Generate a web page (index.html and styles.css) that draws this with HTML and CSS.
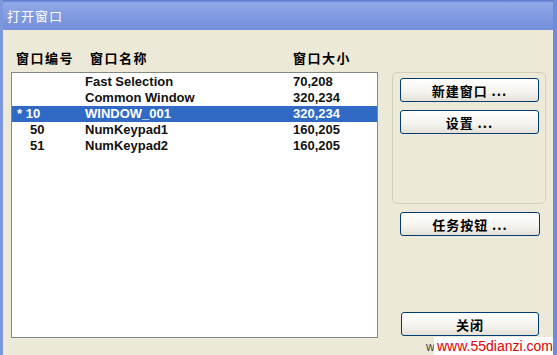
FILE: index.html
```html
<!DOCTYPE html>
<html>
<head>
    <title>打开窗口</title>
    <link rel="stylesheet" href="styles.css">
</head>
<body>
    <div class="window">
        <div class="titlebar">打开窗口</div>
        <div class="main">
            <div class="left">
                <div class="heads">
                    <span class="c1">窗口编号</span>
                    <span class="c2">窗口名称</span>
                    <span class="c3">窗口大小</span>
                </div>
                <div class="listbox">
                    <div class="row"><span class="n"></span><span class="name">Fast Selection</span><span class="size">70,208</span></div>
                    <div class="row"><span class="n"></span><span class="name">Common Window</span><span class="size">320,234</span></div>
                    <div class="row sel"><span class="n">* 10</span><span class="name">WINDOW_001</span><span class="size">320,234</span></div>
                    <div class="row"><span class="n ind">50</span><span class="name">NumKeypad1</span><span class="size">160,205</span></div>
                    <div class="row"><span class="n ind">51</span><span class="name">NumKeypad2</span><span class="size">160,205</span></div>
                </div>
            </div>
            <div class="right">
                <div class="group">
                    <button class="btn">新建窗口 ...</button>
                    <button class="btn">设置 ...</button>
                </div>
                <button class="btn task">任务按钮 ...</button>
                <button class="btn close">关闭</button>
            </div>
        </div>
        <span class="mark-back">w</span>
        <span class="mark">www.55dianzi.com</span>
    </div>
</body>
</html>
```

FILE: styles.css
```css
body {
    margin: 0;
    background: #ece9d8;
    font-family: "Liberation Sans", "Noto Sans CJK SC", sans-serif;
}
.window {
    position: relative;
    width: 557px;
    height: 355px;
    box-sizing: border-box;
    border-left: 3px solid #7c97de;
    border-right: 4px solid #6f8cdc;
    overflow: hidden;
}
.titlebar {
    height: 30px;
    line-height: 31px;
    color: #fff;
    font-size: 13px;
    font-family: "Noto Sans CJK SC", sans-serif;
    letter-spacing: 1px;
    background: linear-gradient(#5674cc 0, #92a9e8 3px, #8aa2e4 30%, #7c96de 70%, #7490dc 100%);
    margin-left: -3px;
    margin-right: -4px;
    padding-left: 7px;
}
.main {
    display: flex;
    padding: 20px 7px 0 8px;
}
.left {
    width: 367px;
}
.heads {
    display: flex;
    height: 16px;
    line-height: 16px;
    margin-bottom: 6px;
    font-family: "Noto Sans CJK SC", sans-serif;
    font-weight: bold;
    font-size: 13px;
    letter-spacing: 1.5px;
}
.heads .c1 { margin-left: 5px; width: 74px; }
.heads .c2 { width: 203px; }
.listbox {
    height: 266px;
    box-sizing: border-box;
    border: 1px solid #7f8a80;
    background: #fff;
    padding-top: 1px;
}
.row {
    display: flex;
    height: 16px;
    line-height: 16px;
    font-size: 13px;
    font-weight: bold;
    color: #111;
}
.row.sel {
    background: #316ac5;
    color: #fff;
}
.row .n { width: 73px; padding-left: 5px; box-sizing: border-box; }
.row .n.ind { padding-left: 18px; }
.row .name { width: 208px; }
.right {
    margin-left: 14px;
    width: 154px;
    padding-top: 22px;
    display: flex;
    flex-direction: column;
}
.group {
    height: 132px;
    box-sizing: border-box;
    border: 1px solid #d2cfbd;
    border-radius: 5px;
    padding: 5px 0 0 7px;
    display: flex;
    flex-direction: column;
    gap: 8px;
}
.btn {
    width: 139px;
    height: 24px;
    border: 1px solid #003c74;
    border-radius: 3px;
    background: linear-gradient(#ffffff, #f4f3ee 60%, #e3e0d6);
    font-family: "Noto Sans CJK SC", sans-serif;
    font-weight: bold;
    font-size: 13px;
    letter-spacing: 1px;
    color: #000;
    padding: 0;
}
.task {
    margin: 8px 0 0 8px;
    width: 140px;
}
.close {
    margin: 76px 0 0 9px;
    width: 138px;
}
.mark-back {
    position: absolute;
    left: 423px;
    top: 340px;
    font-size: 12px;
    color: #444;
}
.mark {
    position: absolute;
    left: 431px;
    top: 337px;
    height: 18px;
    line-height: 18px;
    padding: 0 4px 0 3px;
    background: #fff;
    color: #e00000;
    font-size: 14px;
}
```
